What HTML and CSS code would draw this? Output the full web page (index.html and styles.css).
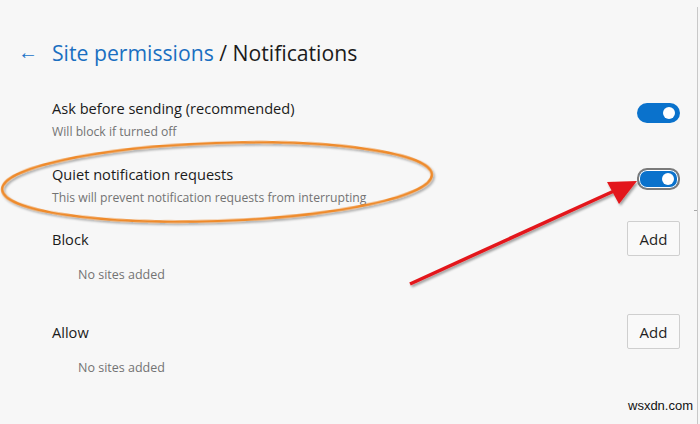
FILE: index.html
```html
<!DOCTYPE html>
<html lang="en">
<head>
    <meta charset="UTF-8">
    <meta name="viewport" content="width=device-width, initial-scale=1.0">
    <title>Site permissions / Notifications</title>
    <link rel="stylesheet" href="styles.css">
</head>
<body>
    <div class="page">
        <!-- Header with back arrow -->
        <div class="header">
            <span class="back">&#8592;</span>
            <h1><span class="crumb">Site permissions</span> / Notifications</h1>
        </div>

        <!-- Toggle settings -->
        <div class="row">
            <div>
                <div class="label">Ask before sending (recommended)</div>
                <div class="desc">Will block if turned off</div>
            </div>
            <span class="toggle"><span class="knob"></span></span>
        </div>
        <div class="row quiet">
            <div>
                <div class="label">Quiet notification requests</div>
                <div class="desc">This will prevent notification requests from interrupting</div>
            </div>
            <span class="toggle focused"><span class="knob"></span></span>
        </div>

        <!-- Block / Allow lists -->
        <div class="section">
            <div class="section-head">
                <div class="label">Block</div>
                <button class="add">Add</button>
            </div>
            <div class="empty">No sites added</div>
        </div>
        <div class="section">
            <div class="section-head">
                <div class="label">Allow</div>
                <button class="add">Add</button>
            </div>
            <div class="empty">No sites added</div>
        </div>
    </div>

    <div class="scrollbar"><span class="tick"></span></div>

    <!-- Annotations drawn over the screenshot -->
    <svg class="marks" width="700" height="424" viewBox="0 0 700 424">
        <defs>
            <filter id="shadow" x="-10%" y="-10%" width="120%" height="130%">
                <feDropShadow dx="1.5" dy="2" stdDeviation="1.2" flood-color="#000" flood-opacity="0.35"/>
            </filter>
        </defs>
        <ellipse cx="217" cy="182" rx="215" ry="39" transform="rotate(-2 217 182)" fill="none" stroke="#ef8a2a" stroke-width="2.5" filter="url(#shadow)"/>
        <g filter="url(#shadow)">
            <line x1="410" y1="284" x2="614" y2="191" stroke="#e3191b" stroke-width="3.5"/>
            <polygon points="637,181 607,182 619,204" fill="#e3191b"/>
        </g>
    </svg>

    <div class="watermark">wsxdn.com</div>
</body>
</html>
```

FILE: styles.css
```css
html, body {
    margin: 0;
    height: 100%;
}
body {
    background-color: #f7f7f7;
    font-family: "Open Sans", "Noto Sans", sans-serif;
    color: #1b1b1b;
    position: relative;
    overflow: hidden;
}
.page {
    width: 628px;
    padding: 36px 20px 0 52px;
}
.header {
    display: flex;
    align-items: center;
    margin-left: -34px;
    gap: 14px;
    height: 32px;
}
.back {
    color: #1a73c8;
    font-size: 20px;
    line-height: 1;
}
h1 {
    margin: 0;
    font-size: 21.2px;
    font-weight: 400;
    color: #1b1b1b;
}
.crumb {
    color: #1a6fc1;
}
.row {
    display: flex;
    justify-content: space-between;
    align-items: center;
    margin-top: 30px;
}
.row.quiet {
    margin-top: 23px;
}
.label {
    font-size: 14.6px;
    line-height: 20px;
    color: #1b1b1b;
}
.desc {
    font-size: 12.2px;
    line-height: 18px;
    margin-top: 5px;
    color: #737373;
}
.toggle {
    width: 43px;
    height: 20px;
    border-radius: 10px;
    background-color: #0a72cc;
    position: relative;
    margin-top: -14px;
    box-sizing: border-box;
}
.toggle.focused {
    border: 2px solid #7b7b7b;
    box-shadow: inset 0 0 0 1px #fff;
    height: 22px;
}
.knob {
    position: absolute;
    right: 5px;
    top: 4px;
    width: 12px;
    height: 12px;
    border-radius: 50%;
    background-color: #fff;
}
.toggle.focused .knob {
    top: 3px;
    right: 4px;
}
.section {
    margin-top: 14px;
}
.section + .section {
    margin-top: 31px;
}
.section-head {
    display: flex;
    justify-content: space-between;
    align-items: center;
}
.add {
    width: 53px;
    height: 35px;
    background-color: #f9f9f9;
    border: 1px solid #cfcfcf;
    border-radius: 2px;
    font-family: "Open Sans", "Noto Sans", sans-serif;
    font-size: 15px;
    color: #1f1f1f;
    padding: 0;
}
.empty {
    font-size: 12.5px;
    color: #737373;
    padding-left: 26px;
    margin-top: 10px;
}
.scrollbar {
    position: absolute;
    right: 2px;
    top: 7px;
    bottom: 0;
    width: 1px;
    background-color: #c8c8c8;
}
.tick {
    position: absolute;
    left: -3px;
    top: 203px;
    width: 3px;
    height: 1px;
    background-color: #a8a8a8;
}
.marks {
    position: absolute;
    left: 0;
    top: 0;
    pointer-events: none;
}
.watermark {
    position: absolute;
    left: 628px;
    top: 398px;
    font-family: "Liberation Sans", Arial, sans-serif;
    font-size: 13px;
    color: #111;
}
```
